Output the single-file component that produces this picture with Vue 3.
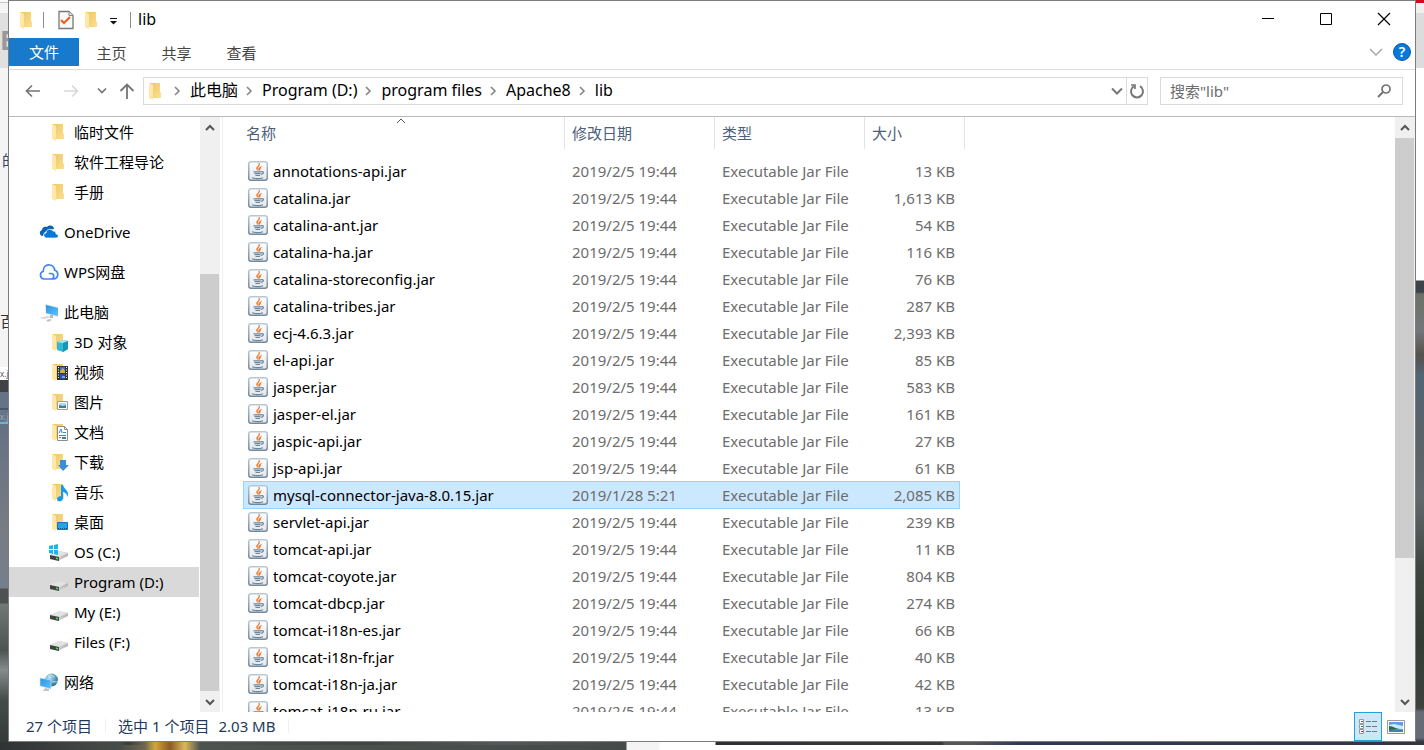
<script setup>
import { ref } from 'vue'

const crumbs = ['此电脑', 'Program (D:)', 'program files', 'Apache8', 'lib']
const query = ref('')
const selected = ref('mysql-connector-java-8.0.15.jar')

const groups = [
  { child: true, items: [['folder', '临时文件'], ['folder', '软件工程导论'], ['folder', '手册']] },
  { items: [['onedrive', 'OneDrive']] },
  { items: [['wps', 'WPS网盘']] },
  {
    items: [
      ['pc', '此电脑'],
      ['objects', '3D 对象', true],
      ['video', '视频', true],
      ['pictures', '图片', true],
      ['documents', '文档', true],
      ['downloads', '下载', true],
      ['music', '音乐', true],
      ['desktop', '桌面', true],
      ['osdrive', 'OS (C:)', true],
      ['drive', 'Program (D:)', true],
      ['drive', 'My (E:)', true],
      ['drive', 'Files (F:)', true],
    ],
  },
  { items: [['network', '网络']] },
]

const files = [
  ['annotations-api.jar', '13 KB'],
  ['catalina.jar', '1,613 KB'],
  ['catalina-ant.jar', '54 KB'],
  ['catalina-ha.jar', '116 KB'],
  ['catalina-storeconfig.jar', '76 KB'],
  ['catalina-tribes.jar', '287 KB'],
  ['ecj-4.6.3.jar', '2,393 KB'],
  ['el-api.jar', '85 KB'],
  ['jasper.jar', '583 KB'],
  ['jasper-el.jar', '161 KB'],
  ['jaspic-api.jar', '27 KB'],
  ['jsp-api.jar', '61 KB'],
  ['mysql-connector-java-8.0.15.jar', '2,085 KB', '2019/1/28 5:21'],
  ['servlet-api.jar', '239 KB'],
  ['tomcat-api.jar', '11 KB'],
  ['tomcat-coyote.jar', '804 KB'],
  ['tomcat-dbcp.jar', '274 KB'],
  ['tomcat-i18n-es.jar', '66 KB'],
  ['tomcat-i18n-fr.jar', '40 KB'],
  ['tomcat-i18n-ja.jar', '42 KB'],
  ['tomcat-i18n-ru.jar', '13 KB'],
].map(([name, size, date = '2019/2/5 19:44']) => ({ name, size, date }))
</script>

<template>
  <div class="screen">
    <svg class="defs" aria-hidden="true">
      <defs>
        <linearGradient id="gBack" x1="0" x2="1" y1="0" y2="1">
          <stop offset="0" stop-color="#efc765" /><stop offset="1" stop-color="#fbdf90" />
        </linearGradient>
        <linearGradient id="gFlap" x1="0" x2="0" y1="0" y2="1">
          <stop offset="0" stop-color="#ffe9ad" /><stop offset="1" stop-color="#ffe6a0" />
        </linearGradient>
        <linearGradient id="gScreen" x1="0" x2="1" y1="0" y2="1">
          <stop offset="0" stop-color="#2d94e4" /><stop offset="1" stop-color="#5cc2fb" />
        </linearGradient>
        <linearGradient id="gJar" x1="0" x2="0" y1="0" y2="1">
          <stop offset="0" stop-color="#ffffff" /><stop offset="1" stop-color="#e3e6ea" />
        </linearGradient>
        <linearGradient id="gEdge" x1="0" x2="0" y1="0" y2="1">
          <stop offset="0" stop-color="#b7c8d5" /><stop offset="1" stop-color="#74899b" />
        </linearGradient>
        <linearGradient id="gDrive" x1="0" x2="1" y1="0" y2="0">
          <stop offset="0" stop-color="#e6e6e6" /><stop offset="1" stop-color="#b3b3b3" />
        </linearGradient>
        <radialGradient id="gGlobe" cx=".35" cy=".3" r=".8">
          <stop offset="0" stop-color="#c9e8f5" /><stop offset=".5" stop-color="#5ba3c4" /><stop offset="1" stop-color="#25658a" />
        </radialGradient>
      </defs>
      <symbol id="folder" viewBox="0 0 20 20">
        <path d="M4 2h10v9l1 1v5H4z" fill="url(#gBack)" />
        <path d="M3 2l4 2v15l-4-2z" fill="url(#gFlap)" />
      </symbol>
      <symbol id="objects" viewBox="0 0 20 20">
        <use href="#folder" />
        <path d="M8 10l6-2 5 1v8l-5 3-6-2z" fill="#35b8d3" />
        <path d="M8 10l6-2 5 1-5 2z" fill="#a5e7f1" /><path d="M14 11l5-2v8l-5 3z" fill="#1596b6" />
      </symbol>
      <symbol id="video" viewBox="0 0 20 20">
        <use href="#folder" />
        <path d="M8 4h11v14H8z" fill="#333" /><path d="M11 5h5v6h-5z" fill="#386de0" />
        <path d="M11 12h5v5h-5z" fill="#2853b3" /><path d="M11 9l3-3 2 3v2h-5z" fill="#d3b32b" /><path d="M13 14h3v2h-3z" fill="#71a5ef" />
        <path d="M9.500 5v12M17.500 5v12" stroke="#fff" stroke-dasharray="1 1.500" />
      </symbol>
      <symbol id="pictures" viewBox="0 0 20 20">
        <use href="#folder" />
        <path d="M8.500 9.500h10v8h-10z" fill="#fff" stroke="#9a9a9a" />
        <path d="M10 11h7v5h-7z" fill="#aadcfa" /><path d="M10 13l4 1 3-1v3h-7z" fill="#477d87" />
      </symbol>
      <symbol id="documents" viewBox="0 0 20 20">
        <use href="#folder" />
        <path d="M8.500 4.500h7l3 3v11h-10z" fill="#fff" stroke="#8d8d8d" />
        <path d="M15.500 4.500v3h3" fill="none" stroke="#8d8d8d" />
        <path d="M10 11l2-4 1 4M10 13.500h7M10 15.500h2M14 10.500h3" stroke="#2b91cf" fill="none" /><path d="M13 15h4v2h-4z" fill="#527686" />
      </symbol>
      <symbol id="downloads" viewBox="0 0 20 20">
        <use href="#folder" /><path d="M11 8h6v5h3l-6 6-5-6h2z" fill="#388ddd" />
      </symbol>
      <symbol id="music" viewBox="0 0 20 20">
        <use href="#folder" />
        <path d="M12 3h2c1 4 5 5 5 9 0 2-1 3-1 3 0-3-1-4-4-5v6c0 3-3 4-5 3-2-1-1-5 3-5z" fill="#149bf1" />
      </symbol>
      <symbol id="desktop" viewBox="0 0 20 20">
        <use href="#folder" />
        <path d="M8.500 10.500h10v7h-10z" fill="#24a2ef" stroke="#1378bb" /><path d="M9 16.500h9" stroke="#124f7c" stroke-dasharray="1 1" />
      </symbol>
      <symbol id="onedrive" viewBox="0 0 20 20">
        <path d="M4 14c-4 0-4-5-1-6 0-3 3-4 5-3 3-3 7-1 7 2L9 8l-4 3z" fill="#0a63ba" />
        <path d="M7 16c-3-1-3-5 0-5 0-4 5-5 7-2 2 0 3 1 3 3 3 0 3 4 0 4z" fill="#0879d9" stroke="#fff" stroke-width=".7" />
      </symbol>
      <symbol id="wps" viewBox="0 0 20 20">
        <path d="M10.500 11.500h2a2.800 2.800 0 0 1 0 5.500H5A4 4 0 0 1 4.300 9.200C4 0.800 15 0.800 15.700 8.300A4.500 4.500 0 0 1 15 17h-1" fill="none" stroke="#4487ec" stroke-width="1.700" stroke-linecap="round" />
      </symbol>
      <symbol id="pc" viewBox="0 0 20 20">
        <path d="M6 2l13 3v10L7 12z" fill="#dce1e5" /><path d="M7 3l12 3v8L7 11z" fill="url(#gScreen)" />
        <path d="M0 16l8-2 5 1-8 2z" fill="#d5d9dd" /><path d="M7 18l4-1 2 1-4 2z" fill="#bec4c9" /><path d="M11 13h3v3h-3z" fill="#b2bac0" />
      </symbol>
      <symbol id="drive" viewBox="0 0 20 20">
        <path d="M1 13l9-4 9 2v3l-10 5-8-2z" fill="url(#gDrive)" />
        <path d="M1 13l9-4 9 2-9 4z" fill="#e2e2e2" /><path d="M1 13l9 2v4l-9-2z" fill="#414141" /><path d="M7 16l2 1" stroke="#35e548" stroke-width="1.500" />
      </symbol>
      <symbol id="osdrive" viewBox="0 0 20 20">
        <use href="#drive" /><path d="M0 4l4-1v4H0zM5 3l4-1v5H5zM0 8h4v4l-4-1zM5 8h4v5l-4-1z" fill="#1bb5ec" />
      </symbol>
      <symbol id="network" viewBox="0 0 20 20">
        <circle cx="12.500" cy="8" r="6.500" fill="url(#gGlobe)" />
        <path d="M9 4c3-2 5 0 7 1M13 10c3-1 4 1 6-1" stroke="#c5e3ed" fill="none" />
        <path d="M1 6l11 2v9L1 14z" fill="url(#gScreen)" stroke="#d7e5ee" stroke-width=".6" /><path d="M6 16l4 1v2H4z" fill="#bfc5ca" />
      </symbol>
      <symbol id="jar" viewBox="0 0 20 20">
        <rect x=".75" y=".75" width="18.500" height="18.500" rx="2.200" fill="url(#gJar)" stroke="url(#gEdge)" stroke-width="1.500" />
        <path d="M10 9.500C6 6 12 5.500 11 2c2 3-3 4-1 7.500zM11 9.500c-1-2 0-3 2.500-4-2 1.500 0 2.500-2.500 4z" fill="#ed7a2e" stroke="#ed7a2e" stroke-width=".7" />
        <path d="M5.500 10.800h7.500M6.500 12.700h6M7.500 14.500h4.500M4 16.700c3 1 8 1 11 0M13 10.800c3.500-.8 3 2.200-.2 2.700" fill="none" stroke="#69869c" stroke-width="1.200" />
      </symbol>
    </svg>

    <div class="edge left" aria-hidden="true">
      <b>E</b><i class="de">的</i><i class="bai">百</i><small>x.j</small><small class="low">x.j</small>
    </div>

    <main class="window">
      <header class="title">
        <svg class="ic"><use href="#folder" /></svg>
        <span class="bar"></span>
        <button class="check" aria-label="属性">
          <svg width="16" height="20" viewBox="0 0 16 20"><path d="M1 1.500h10l4 4v13H1z" fill="#f8f8f8" stroke="#777" stroke-width="1.300" /><path d="M11 1.500v4h4" fill="#ddd" stroke="#888" /><path d="M3 10l3 3 6-6" fill="none" stroke="#ed5d17" stroke-width="2" /></svg>
        </button>
        <button class="new" aria-label="新建文件夹"><svg class="ic"><use href="#folder" /></svg></button>
        <button class="more" aria-label="自定义快速访问工具栏"><svg width="8" height="8"><path d="M1 1.500h7" stroke="#111" /><path d="M1 4h7L4.500 7.500z" fill="#111" /></svg></button>
        <span class="bar"></span>
        <h1>lib</h1>
        <div class="controls">
          <button aria-label="最小化"><svg width="14" height="14"><path d="M1 6.500h12" stroke="#000" /></svg></button>
          <button aria-label="最大化"><svg width="14" height="14"><path d="M1.500 1.500h11v11h-11z" fill="none" stroke="#000" /></svg></button>
          <button aria-label="关闭"><svg width="14" height="14"><path d="M1 1l12 12M13 1L1 13" stroke="#000" stroke-width="1.200" /></svg></button>
        </div>
      </header>

      <nav class="tabs" aria-label="功能区">
        <button class="file">文件</button><button>主页</button><button>共享</button><button>查看</button>
        <span class="grow"></span>
        <button class="expand" aria-label="展开功能区"><svg width="14" height="9"><path d="M1 1l6 6 6-6" fill="none" stroke="#a2a2a2" stroke-width="1.300" /></svg></button>
        <button class="help" aria-label="帮助">?</button>
      </nav>

      <div class="address">
        <button class="back" aria-label="后退"><svg width="16" height="14"><path d="M15 7H2M7 1.500L1.500 7 7 12.500" fill="none" stroke="#747474" stroke-width="1.700" /></svg></button>
        <button class="forward" aria-label="前进"><svg width="16" height="14"><path d="M1 7h13M9 1.500L14.500 7 9 12.500" fill="none" stroke="#d8d8d8" stroke-width="1.700" /></svg></button>
        <button class="recent" aria-label="最近位置"><svg width="10" height="8"><path d="M1 1.500l4 4 4-4" fill="none" stroke="#777" stroke-width="1.700" /></svg></button>
        <button class="up" aria-label="上移"><svg width="16" height="16"><path d="M8 16V2M1.500 8L8 1.500 14.500 8" fill="none" stroke="#747474" stroke-width="1.800" /></svg></button>
        <div class="path">
          <svg class="ic"><use href="#folder" /></svg>
          <template v-for="c in crumbs" :key="c">
            <svg class="sep" width="7" height="10"><path d="M1 1l4 4-4 4" fill="none" stroke="#858585" stroke-width="1.600" /></svg>
            <button class="crumb">{{ c }}</button>
          </template>
          <span class="grow"></span>
          <button class="drop" aria-label="以前的位置"><svg width="12" height="9"><path d="M1 1.500l5 5 5-5" fill="none" stroke="#777" stroke-width="2" /></svg></button>
          <button class="refresh" aria-label="刷新"><svg width="16" height="16"><path d="M11 3.200A6 6 0 1 1 5 3.200" fill="none" stroke="#777" stroke-width="2" /><path d="M2 2h4v4" fill="none" stroke="#777" stroke-width="1.700" /></svg></button>
        </div>
        <label class="search">
          <input v-model="query" type="text" placeholder="搜索&quot;lib&quot;" aria-label="搜索 lib" />
          <svg width="14" height="14"><circle cx="9" cy="5" r="4" fill="none" stroke="#747474" stroke-width="1.700" /><path d="M6 8l-5 5" stroke="#747474" stroke-width="2" /></svg>
        </label>
      </div>

      <div class="content">
        <nav class="tree" aria-label="导航窗格">
          <ul v-for="(g, i) in groups" :key="i">
            <li v-for="[icon, label, child] in g.items" :key="label">
              <a href="#" :class="{ child: child || g.child, current: label === 'Program (D:)' }">
                <svg class="ic"><use :href="'#' + icon" /></svg>{{ label }}
              </a>
            </li>
          </ul>
        </nav>
        <div class="scroll tree-scroll">
          <button aria-label="向上滚动"><svg width="10" height="8"><path d="M1 6l4-4 4 4" fill="none" stroke="#555" stroke-width="2" /></svg></button>
          <div class="track"><span class="before"></span><span class="thumb"></span></div>
          <button aria-label="向下滚动"><svg width="10" height="8"><path d="M1 2l4 4 4-4" fill="none" stroke="#555" stroke-width="2" /></svg></button>
        </div>
        <section class="list">
          <table>
            <colgroup><col class="c-name" /><col class="c-mid" /><col class="c-mid" /><col class="c-size" /><col class="c-end" /></colgroup>
            <thead>
              <tr>
                <th scope="col" aria-sort="ascending">名称
                  <svg class="sort" width="10" height="6"><path d="M1 5l4-4 4 4" fill="none" stroke="#555" /></svg>
                </th>
                <th scope="col">修改日期</th><th scope="col">类型</th><th scope="colgroup" colspan="2">大小</th>
              </tr>
            </thead>
            <tbody>
              <tr v-for="f in files" :key="f.name" :class="{ selected: f.name === selected }" @click="selected = f.name">
                <td><span class="name"><svg class="ic"><use href="#jar" /></svg>{{ f.name }}</span></td>
                <td>{{ f.date }}</td>
                <td>Executable Jar File</td>
                <td class="size">{{ f.size }}</td>
              </tr>
            </tbody>
          </table>
        </section>
        <div class="scroll list-scroll">
          <button aria-label="向上滚动"><svg width="10" height="8"><path d="M1 6l4-4 4 4" fill="none" stroke="#555" stroke-width="2" /></svg></button>
          <div class="track"><span class="thumb"></span></div>
          <button aria-label="向下滚动"><svg width="10" height="8"><path d="M1 2l4 4 4-4" fill="none" stroke="#555" stroke-width="2" /></svg></button>
        </div>
      </div>

      <footer class="status">
        <span class="cell">27 个项目</span>
        <span class="cell"><span>选中 1 个项目</span><span>2.03 MB</span></span>
        <span class="grow"></span>
        <button class="view on" aria-label="详细信息"><svg width="18" height="16"><g fill="#fff" stroke="#999"><path d="M.5.500h4v4h-4zM.5 5.500h4v4h-4zM.5 10.500h4v4h-4z" /></g><path d="M2 2h2v1H2z" fill="#287a68" /><path d="M2 7h2v1H2z" fill="#3b62c8" /><path d="M2 12h2v1H2z" fill="#c9362b" /><path d="M7 2.500h5M13 2.500h5M7 7.500h5M13 7.500h5M7 12.500h5M13 12.500h5" stroke="#6e7a81" /></svg></button>
        <button class="view" aria-label="大图标"><svg width="18" height="14"><path d="M.5.500h17v13H.5z" fill="#fff" stroke="#999" /><path d="M2 2h14v10H2z" fill="#5a9cf0" /><path d="M2 5l5-1 9 2v3H2z" fill="#cfe9f9" /><path d="M2 6c4 0 7 3 11 3l-11 1z" fill="#28694d" /><path d="M2 10h14v2H2z" fill="#477fa6" /></svg></button>
      </footer>
    </main>

    <div class="edge right" aria-hidden="true"></div>
    <div class="edge bottom" aria-hidden="true"></div>
  </div>
</template>

<style>
body { margin: 0; overflow: hidden; }
</style>

<style scoped>
* { box-sizing: border-box; }
.screen {
  display: grid;
  grid-template: minmax(0, 1fr) 8px / 8px minmax(0, 1fr) 8px;
  height: 100vh;
  font: 15px/20px "Noto Sans", "Noto Sans CJK SC", sans-serif;
  color: #000;
}
.defs { position: absolute; width: 0; height: 0; }
.ic { display: block; flex: none; width: 20px; height: 20px; }
.grow { flex: 1; }
button { margin: 0; padding: 0; border: 0; background: none; font: inherit; color: inherit; display: flex; align-items: center; justify-content: center; flex: none; }

.edge.left {
  position: relative;
  overflow: hidden;
  background: linear-gradient(#f8f8f8 2px, #c9c9c9 2px 3px, #f5f5f5 3px 13px, #e0e0e0 13px 68px, #f4f4f4 68px 367px, #fff 367px 380px, #404245 380px 392px, #667285 392px 408px, #4b5666 408px 410px, #67758a 410px 422px, #69b5d4 422px 424px, #657284 424px, #777c84 530px, #747e8b 588px, #4d5152 589px 603px, #717976 604px, #4c5450 650px, #858b8b 670px, #444c48 700px, #343b38);
}
.edge b, .edge i, .edge small { position: absolute; font-style: normal; white-space: nowrap; }
.edge b { left: 0; top: 29px; font-size: 26px; line-height: 22px; color: #989898; }
.edge .de { left: 2px; top: 150px; color: #31456b; }
.edge .bai { left: 0; top: 311px; color: #333; }
.edge small { left: 0; top: 368px; font-size: 8px; line-height: 12px; color: #555; }
.edge .low { top: 411px; color: #9fa8b5; }
.edge.right {
  background: linear-gradient(#c90d1c 3px, #f0f0f0 3px 13px, #dcdcdc 13px 68px, #fff 68px 280px, #3c4349 281px 292px, #6c7068 294px, #747779 330px, #55524c 355px, #526575 375px, #59636b 420px, #62676a 500px, #3f4540 570px, #343b35 640px, #3d423e 708px, #676b76 712px 738px, #34323d);
}
.edge.bottom {
  grid-column: 1 / -1;
  background:
    linear-gradient(90deg, #303334, #474c49 120px, #373b3b 128px, #6f6551 145px, #d2a638 155px, #8c5b25 170px, #ddb75a 185px, #4c5450 200px, #3e4541 360px, #52595a 500px, #454b48 626px, #f4f4f4 627px 659px, #fff 660px 715px, #302f36 716px, #3a3a3d 942px, #575656 944px 970px, #303957 1020px, #343542) top / 100% 3px no-repeat,
    linear-gradient(90deg, #303334, #474c49 120px, #6f6551 145px, #d2a638 155px, #8c5b25 170px, #ddb75a 185px, #4c5450 200px, #454b48 626px, #f4f4f4 627px 659px, #fff 660px);
}

.window { display: flex; flex-direction: column; min-width: 0; border: 1px solid #7c7c7c; background: #fff; }

.title { display: flex; align-items: center; flex: none; height: 37px; padding-left: 8px; }
.title .bar { width: 1px; height: 16px; background: #8c8c8c; }
.title > .bar:first-of-type { margin-left: 6px; }
.check { width: 16px; margin-left: 14px; }
.new { margin-left: 8px; }
.more { width: 8px; margin: 3px 13px 0 7px; }
.title h1 { margin: 0 0 0 7px; padding-bottom: 2px; font-size: 16px; font-weight: 400; line-height: 20px; }
.controls { display: flex; margin-left: auto; margin-right: 2px; }
.controls button { width: 58px; height: 37px; padding-bottom: 2px; }

.tabs { display: flex; align-items: center; flex: none; height: 32px; padding-bottom: 4px; border-bottom: 1px solid #dadbdc; color: #444; }
.tabs button { width: 65px; height: 28px; padding-top: 2px; }
.tabs .file { width: 70px; padding: 0; background: #1979ca; color: #fff; }
.tabs .expand { width: 14px; margin-right: 10px; }
.tabs .help { width: 18px; height: 18px; padding: 0; margin-right: 4px; border: 1px solid #0a5ba7; border-radius: 50%; background: #0579dc; color: #fff; font-weight: 600; font-size: 14px; line-height: 16px; }

.address { display: flex; align-items: center; flex: none; height: 47px; padding: 0 12px 4px 16px; border-bottom: 1px solid #b9b9b9; }
.back { width: 16px; margin-right: 22px; }
.forward { width: 16px; margin-right: 18px; }
.recent { width: 10px; margin-right: 12px; }
.up { width: 16px; margin-right: 8px; }
.path { display: flex; align-items: center; flex: 1; min-width: 0; height: 28px; border: 1px solid #d9d9d9; padding-left: 2px; }
.path .sep { flex: none; margin: 0 9px 0 8px; }
.crumb { padding-bottom: 2px; font-size: 16px; }
.drop { width: 18px; height: 26px; }
.refresh { width: 21px; height: 26px; border-left: 1px solid #d9d9d9; }
.search { display: flex; align-items: center; width: 243px; height: 28px; margin-left: 12px; padding: 0 11px 0 9px; border: 1px solid #d9d9d9; }
.search input { flex: 1; min-width: 0; height: 24px; padding: 0; border: 0; outline: 0; background: none; font: inherit; }
.search input::placeholder { color: #6d6d6d; opacity: 1; }

.content { display: flex; flex: 1; min-height: 0; }
.tree { width: 190px; overflow: hidden; flex: none; }
.tree ul { margin: 0 0 10px; padding: 0; list-style: none; }
.tree a { display: flex; align-items: center; gap: 5px; height: 30px; padding-left: 30px; color: #000; text-decoration: none; white-space: nowrap; }
.tree a.child { padding-left: 40px; }
.tree a.current { background: #d9d9d9; }
.scroll { display: flex; flex-direction: column; flex: none; width: 20px; background: #f0f0f0; }
.scroll button { width: 19px; height: 21px; }
.track { display: flex; flex-direction: column; flex: 1; }
.thumb { width: 19px; background: #cdcdcd; }
.tree-scroll { margin-left: 1px; }
.tree-scroll .before { flex: 136; }
.tree-scroll .thumb { flex: 417; }
.list-scroll .thumb { height: 76%; }
.list { flex: 1; min-width: 0; overflow: hidden; margin-left: 2px; padding-left: 20px; border-left: 1px solid #f0f0f0; }
table { width: 722px; table-layout: fixed; border-collapse: separate; border-spacing: 0; }
.c-name { width: 322px; }
.c-mid { width: 150px; }
.c-size { width: 95px; }
.c-end { width: 5px; }
th { position: relative; height: 32px; padding: 0 0 0 7px; border-right: 1px solid #e3e3e3; text-align: left; font-weight: 400; color: #4c607a; }
th:first-child { padding-left: 3px; }
.sort { position: absolute; left: 50%; top: 1px; margin-left: -8px; }
tbody::before { content: ""; display: block; height: 8px; }
td { height: 27px; padding: 0 0 0 7px; white-space: nowrap; color: #6d6d6d; }
td:first-child { padding-left: 5px; color: #000; }
.name { display: flex; align-items: center; gap: 5px; }
td.size { padding: 0 5px 0 0; text-align: right; }
.selected td { background: #cce8ff; box-shadow: 0 1px #99d1ff, inset 0 1px #99d1ff; }
.selected td:first-child { border-left: 1px solid #99d1ff; padding-left: 4px; }
.selected td.size { border-right: 1px solid #99d1ff; padding-right: 4px; }

.status { display: flex; align-items: center; flex: none; height: 29px; padding-left: 17px; color: #1e395b; }
.status .cell { display: flex; gap: 9px; margin: 0 12px 2px 0; padding-right: 13px; border-right: 1px solid #f0f0f0; line-height: 14px; }
.view { width: 28px; height: 29px; }
.view.on { border: 1px solid #26a0da; background: #cce8f6; }
.status .view:last-child { margin-right: 5px; }
</style>
